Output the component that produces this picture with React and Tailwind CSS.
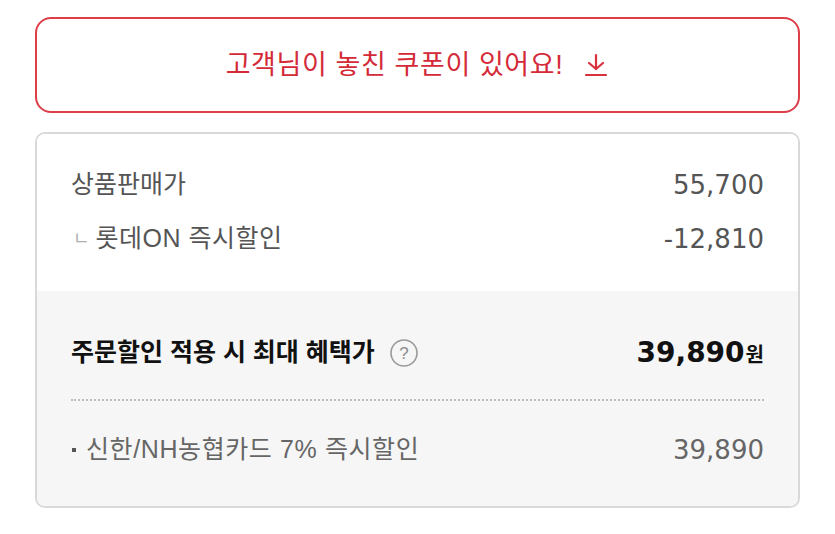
import React from "react";

const font = { fontFamily: '"Liberation Sans", "Noto Sans CJK KR", sans-serif' };
const num = { fontFamily: '"DejaVu Sans", "Noto Sans CJK KR", sans-serif' };

function DownArrow() {
  return (
    <svg width="26" height="26" viewBox="0 0 26 26" fill="none" stroke="#d9303c" strokeWidth="2.2" strokeLinecap="round" strokeLinejoin="round">
      <path d="M13 3v14" />
      <path d="M6 11l7 6 7-6" />
      <path d="M3 23h20" />
    </svg>
  );
}

function HelpIcon() {
  return (
    <svg width="30" height="30" viewBox="0 0 30 30" fill="none">
      <circle cx="15" cy="15" r="13" stroke="#9a9a9a" strokeWidth="1.6" />
      <text x="15" y="21" textAnchor="middle" fontSize="17" fill="#8a8a8a" fontFamily="Liberation Sans, sans-serif">?</text>
    </svg>
  );
}

export default function App() {
  return (
    <div className="w-[835px] h-[534px] bg-white" style={font}>
      <div className="pl-[35px] pr-[35px] pt-[17px]">
        <button
          type="button"
          className="w-full h-[96px] rounded-[16px] border-2 border-[#dd3e48] flex items-center justify-center gap-[20px] text-[27px] tracking-[0.6px] text-[#d42a38]"
        >
          <span>고객님이 놓친 쿠폰이 있어요!</span>
          <DownArrow />
        </button>

        <div className="mt-[19px] h-[376px] rounded-[10px] border-2 border-[#d9d9d9] overflow-hidden flex flex-col">
          <div className="bg-white px-[34px] pt-[28px] h-[157px] flex flex-col gap-[8px]">
            <div className="flex justify-between items-center h-[46px] text-[25px] text-[#555]">
              <span>상품판매가</span>
              <span className="text-[26px]" style={num}>55,700</span>
            </div>
            <div className="flex justify-between items-center h-[46px] text-[25px] text-[#555]">
              <span className="flex items-center">
                <span className="text-[#b0b0b0] text-[18px] ml-[2px] mr-[6px]">ㄴ</span>
                <span className="tracking-[0.5px]">롯데ON 즉시할인</span>
              </span>
              <span className="text-[26px]" style={num}>-12,810</span>
            </div>
          </div>
          <div className="flex-1 bg-[#f6f6f6] px-[34px] pt-[40px]">
            <div className="flex justify-between items-center h-[44px]">
              <div className="flex items-center gap-[14px]">
                <span className="text-[25px] font-bold text-[#111]">주문할인 적용 시 최대 혜택가</span>
                <HelpIcon />
              </div>
              <div className="flex items-baseline text-[#111]">
                <span className="text-[28px] font-bold" style={num}>39,890</span>
                <span className="text-[20px] font-bold ml-[1px]">원</span>
              </div>
            </div>
            <div className="mt-[24px] border-t-2 border-dotted border-[#bdbdbd]" />
            <div className="mt-[26px] flex justify-between items-center h-[46px] text-[25px] text-[#666]">
              <span className="flex items-center">
                <span className="inline-block w-[4px] h-[4px] bg-[#555] ml-[1px] mr-[10px]" />
                <span className="tracking-[0.6px]">신한/NH농협카드 7% 즉시할인</span>
              </span>
              <span className="text-[26px]" style={num}>39,890</span>
            </div>
          </div>
        </div>
      </div>
    </div>
  );
}
